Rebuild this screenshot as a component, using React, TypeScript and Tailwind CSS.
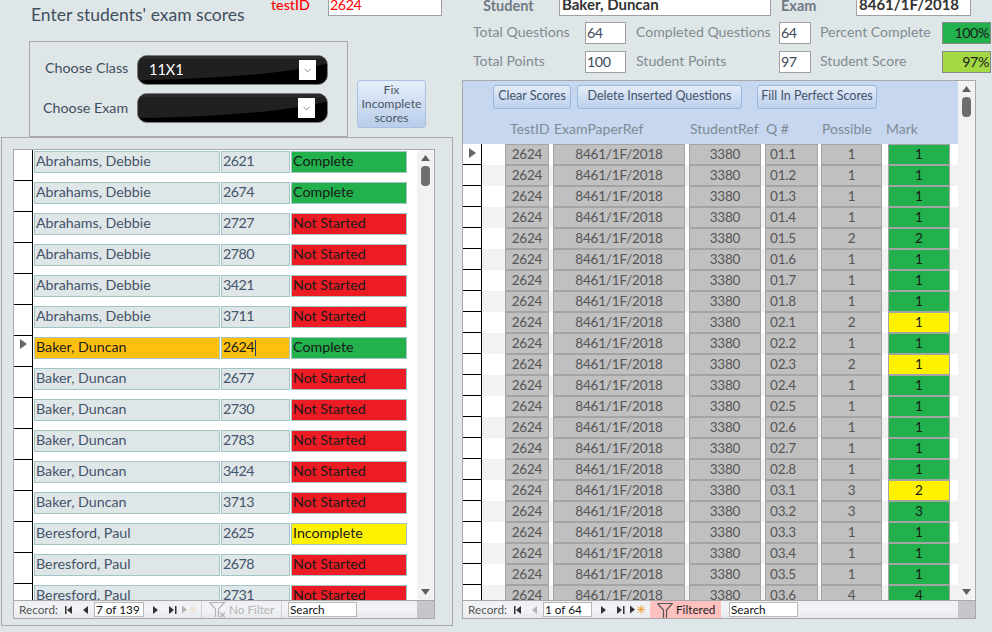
import { ChevronDown } from "lucide-react";

const FONT = "font-['Lato','Open_Sans',sans-serif]";

const students: [string, string, string][] = [
  ["Abrahams, Debbie", "2621", "Complete"],
  ["Abrahams, Debbie", "2674", "Complete"],
  ["Abrahams, Debbie", "2727", "Not Started"],
  ["Abrahams, Debbie", "2780", "Not Started"],
  ["Abrahams, Debbie", "3421", "Not Started"],
  ["Abrahams, Debbie", "3711", "Not Started"],
  ["Baker, Duncan", "2624", "Complete"],
  ["Baker, Duncan", "2677", "Not Started"],
  ["Baker, Duncan", "2730", "Not Started"],
  ["Baker, Duncan", "2783", "Not Started"],
  ["Baker, Duncan", "3424", "Not Started"],
  ["Baker, Duncan", "3713", "Not Started"],
  ["Beresford, Paul", "2625", "Incomplete"],
  ["Beresford, Paul", "2678", "Not Started"],
  ["Beresford, Paul", "2731", "Not Started"],
];

// question, possible, mark
const scores: [string, number, number][] = [
  ["01.1", 1, 1], ["01.2", 1, 1], ["01.3", 1, 1], ["01.4", 1, 1],
  ["01.5", 2, 2], ["01.6", 1, 1], ["01.7", 1, 1], ["01.8", 1, 1],
  ["02.1", 2, 1], ["02.2", 1, 1], ["02.3", 2, 1], ["02.4", 1, 1],
  ["02.5", 1, 1], ["02.6", 1, 1], ["02.7", 1, 1], ["02.8", 1, 1],
  ["03.1", 3, 2], ["03.2", 3, 3], ["03.3", 1, 1], ["03.4", 1, 1],
  ["03.5", 1, 1], ["03.6", 4, 4],
];

function statusClass(s: string) {
  if (s === "Complete") return "bg-[#22b14c]";
  if (s === "Incomplete") return "bg-[#fff200]";
  return "bg-[#ed1c24]";
}

function Combo({ label, value, labelClass, boxClass }: { label: string; value: string; labelClass: string; boxClass: string }) {
  return (
    <div className="flex items-center">
      <span className={`w-[94px] shrink-0 text-[14.25px] text-[#3f4f5f] ${labelClass}`}>{label}</span>
      <div className="relative flex h-[30px] w-[191px] items-center justify-between overflow-hidden rounded-[10px] border border-[#7c7c7c] bg-black pl-[11px] text-[14.5px] text-white">
        {/* glossy arc across the black pill */}
        <svg className="absolute left-0 top-0" width="191" height="30" viewBox="0 0 191 30">
          <path d="M0 0 H191 V7 Q130 22 0 24 Z" fill="#202020" />
          <path d="M0 0 H191 V3 H0 Z" fill="#2c2c2c" />
        </svg>
        <span className="relative">{value}</span>
        <span className={`relative flex h-[20px] w-[17px] items-center justify-center bg-white ${boxClass}`}>
          <ChevronDown className="h-[11px] w-[11px] text-[#555]" strokeWidth={1.5} />
        </span>
      </div>
    </div>
  );
}

function Tri({ className }: { className?: string }) {
  return (
    <svg width="7" height="10" viewBox="0 0 7 10" className={className}>
      <path d="M0 0 L7 5 L0 10 Z" fill="currentColor" />
    </svg>
  );
}

function StudentRow({ row, current }: { row: [string, string, string]; current: boolean }) {
  const field = current
    ? "bg-[#ffc10e] text-[#1c1c1c]"
    : "bg-[#dfe6e8] text-[#44546a]";
  return (
    <div className="flex h-[31px] shrink-0 bg-white">
      <div className="flex h-full w-[19px] shrink-0 justify-center border-r border-b border-black bg-white pt-[3px]">
        {current && <Tri className="text-[#666]" />}
      </div>
      <div className="flex items-start pt-[1px] pl-[1px] text-[14.25px]">
        <div className={`flex h-[22px] w-[186px] items-center border border-[#a3c4c4] pb-[2px] pl-[1px] ${field}`}>{row[0]}</div>
        <div className={`ml-[1px] flex h-[22px] w-[69px] items-center border border-[#a3c4c4] pb-[2px] pl-[1px] tracking-[-0.5px] ${field}`}>
          {row[1]}
          {current && <span className="ml-[1px] mt-[2px] h-[16px] w-[1px] bg-[#1c3a78]" />}
        </div>
        <div className={`ml-[1px] flex h-[22px] w-[116px] items-center border border-[#a3c4c4] pb-[2px] pl-[1px] text-[#1a1a1a] ${statusClass(row[2])}`}>{row[2]}</div>
      </div>
    </div>
  );
}

function Scrollbar() {
  return (
    <div className="flex w-[17px] shrink-0 flex-col items-center rounded-[4px] bg-[#f2f2f2] py-[5px]">
      <svg width="9" height="6" viewBox="0 0 9 6"><path d="M4.5 0 L9 6 L0 6 Z" fill="#606060" /></svg>
      <div className="mt-[5px] h-[20px] w-[9px] rounded-[4px] bg-[#6d6d6d]" />
      <svg className="mt-auto" width="9" height="6" viewBox="0 0 9 6"><path d="M0 0 L9 0 L4.5 6 Z" fill="#606060" /></svg>
    </div>
  );
}

function NavBar({ record, filtered, searchMargin, boxWidth }: { record: string; filtered: boolean; searchMargin: string; boxWidth: string }) {
  const on = "#333";
  const off = "#b4b4b4";
  return (
    <div className="flex h-[17px] min-w-0 flex-1 items-center whitespace-nowrap bg-gradient-to-b from-[#eef0f3] via-[#f2f3f6] to-[#e6e8ec] text-[11.75px] text-[#555]">
      <span className="ml-[5px] w-[43px] shrink-0 pt-[1px]">Record:</span>
      <svg width="8" height="8" viewBox="0 0 8 8" className="ml-[3px] shrink-0"><path d="M0 0 H1.5 V8 H0 Z M7 0 V8 L2 4 Z" fill={on} /></svg>
      <svg width="6" height="8" viewBox="0 0 6 8" className="ml-[10px] shrink-0"><path d="M5 0 V8 L0 4 Z" fill={filtered ? off : on} /></svg>
      <div className={`ml-[5px] flex h-[15px] shrink-0 items-center border border-[#b8b8b8] bg-white pl-[1px] text-[#111] ${boxWidth}`}>{record}</div>
      <svg width="6" height="8" viewBox="0 0 6 8" className="ml-[9px] shrink-0"><path d="M0 0 V8 L5 4 Z" fill={on} /></svg>
      <svg width="8" height="8" viewBox="0 0 8 8" className="ml-[10px] shrink-0"><path d="M0 0 V8 L5 4 Z M6 0 H7.5 V8 H6 Z" fill={on} /></svg>
      <svg width="15" height="9" viewBox="0 0 15 9" className="ml-[5px] shrink-0">
        <path d="M0 0.5 V8.5 L5 4.5 Z" fill={filtered ? on : off} />
        <path d="M11 0.5 V8.5 M7 4.5 H15 M8 1.5 L14 7.5 M14 1.5 L8 7.5" stroke={filtered ? "#f0a030" : "#ece2cc"} strokeWidth="1" />
      </svg>
      {filtered ? (
        <div className="ml-[5px] flex h-[17px] w-[71px] shrink-0 items-center gap-[3px] bg-[#ffc0c0] pl-[7px] text-[#222]">
          <svg width="16" height="15" viewBox="0 0 16 15" className="mt-[1px] shrink-0">
            <path d="M0.5 0.5 H15.5 L9.5 7 V15 M6.5 15 V7 L0.5 0.5" fill="none" stroke="#555" strokeWidth="1.2" />
          </svg>
          Filtered
        </div>
      ) : (
        <div className="ml-[4px] flex h-[17px] w-[81px] shrink-0 items-center gap-[3px] border-x border-[#d0d0d0] pl-[7px] text-[#b4b4b4]">
          <svg width="17" height="16" viewBox="0 0 17 16" className="mt-[1px] shrink-0">
            <path d="M0.5 0.5 H15.5 L9.5 7 V15 M6.5 15 V7 L0.5 0.5" fill="none" stroke="#b5b5b5" strokeWidth="1.2" />
            <path d="M11 10.5 L16 15.5 M16 10.5 L11 15.5" stroke="#b5b5b5" strokeWidth="1.2" />
          </svg>
          No Filter
        </div>
      )}
      <div className={`flex h-[15px] w-[69px] shrink-0 items-center border border-[#b8b8b8] bg-white pl-[1px] text-[#111] ${searchMargin}`}>Search</div>
    </div>
  );
}

function StatLabel({ children, w }: { children: string; w: string }) {
  return <span className={`shrink-0 pb-[3px] text-[14.1px] text-[#7f8a92] ${w}`}>{children}</span>;
}

function Box({ children, w }: { children: string; w: string }) {
  return (
    <div className={`flex h-[22px] shrink-0 items-center border border-[#a0a0a0] bg-white pl-[1px] text-[14.25px] tracking-[-0.4px] text-[#3c4a58] ${w}`}>
      {children}
    </div>
  );
}

function ScoreCell({ w, ml, children, left }: { w: string; ml: string; children: string; left?: boolean }) {
  return (
    <div className={`flex h-[21px] shrink-0 items-center border border-[#a4a4a4] bg-[#c0c0c0] pb-[1px] tracking-[-0.2px] text-[#555] ${w} ${ml} ${left ? "pl-[4px]" : "justify-center"}`}>
      {children}
    </div>
  );
}

function PanelButton({ w, ml, children }: { w: string; ml: string; children: string }) {
  return (
    <button className={`h-[24px] rounded-[3px] border border-[#9ab8de] bg-gradient-to-b from-[#e4ecf8] to-[#bcd0ec] pb-[1px] ${w} ${ml}`}>
      {children}
    </button>
  );
}

export default function App() {
  return (
    <div className={`flex h-[632px] w-[992px] overflow-hidden bg-[#dfe6e8] ${FONT}`}>
      {/* left side: class picker and the student list */}
      <div className="ml-[1px] flex w-[452px] shrink-0 flex-col">
        <div className="flex h-[41px] shrink-0 items-start">
          <h1 className="ml-[30px] mt-[3px] w-[215px] shrink-0 whitespace-nowrap text-[17.5px] leading-[23px] text-[#3f4f5f]">Enter students' exam scores</h1>
          <span className="ml-[25px] -mt-[4px] w-[57px] shrink-0 text-[14.25px] leading-[18px] font-medium text-[#ff0000]">testID</span>
          <div className="-mt-[8px] flex h-[24px] w-[114px] items-end border border-[#a0a0a0] bg-white pl-[1px] text-[14.25px] leading-[21px] tracking-[-0.4px] text-[#ff0000]">2624</div>
        </div>
        <div className="flex h-[96px] shrink-0 items-start">
          <div className="ml-[28px] flex h-[96px] w-[319px] shrink-0 flex-col justify-center gap-[8px] border border-[#a8a8a8] pl-[13px]">
            <Combo label="Choose Class" value="11X1" labelClass="-mt-[5px] pl-[2px]" boxClass="mr-[11px]" />
            <Combo label="Choose Exam" value="" labelClass="" boxClass="mr-[12px]" />
          </div>
          <button className="ml-[9px] mt-[39px] flex h-[48px] w-[69px] shrink-0 items-center justify-center rounded-[3px] border border-[#a9c0e2] bg-gradient-to-b from-[#e6eefa] to-[#b9cdea] pb-[1px] text-[12.25px] leading-[14px] text-[#4a5766]">
            Fix
            <br />
            Incomplete
            <br />
            scores
          </button>
        </div>
        <div className="flex h-[489px] shrink-0 border border-[#a8a8a8] pl-[11px] pt-[11px]">
          <div className="flex h-[470px] w-[422px] flex-col border border-[#a8a8a8]">
            <div className="flex min-h-0 flex-1 bg-white">
              <div className="flex w-[403px] flex-col overflow-hidden">
                {students.map((r, i) => (
                  <StudentRow key={r[1]} row={r} current={i === 6} />
                ))}
              </div>
              <Scrollbar />
            </div>
            <div className="flex shrink-0 border-t border-[#a8a8a8] bg-[#c4c6c9]">
              <NavBar record="7 of 139" filtered={false} searchMargin="ml-[6px]" boxWidth="w-[50px]" />
              <div className="w-[17px] shrink-0" />
            </div>
          </div>
        </div>
      </div>

      {/* right side: the selected test and its questions */}
      <div className="ml-[9px] flex w-[530px] shrink-0 flex-col">
        <div className="flex h-[16px] shrink-0 items-end">
          <span className="ml-[21px] w-[76px] shrink-0 text-[14.5px] leading-[20px] font-bold text-[#6f7a84]">Student</span>
          <div className="-mt-[8px] flex h-[24px] w-[212px] items-end border border-[#a0a0a0] bg-white pl-[2px] text-[15px] leading-[21px] font-bold text-[#333]">Baker, Duncan</div>
          <span className="ml-[10px] w-[75px] shrink-0 text-[14.5px] leading-[20px] font-bold text-[#6f7a84]">Exam</span>
          <div className="-mt-[8px] flex h-[24px] w-[115px] items-end border border-[#a0a0a0] bg-white pl-[2px] text-[15px] leading-[21px] font-bold text-[#333]">8461/1F/2018</div>
        </div>
        <div className="mt-[6px] flex h-[22px] shrink-0 items-center">
          <span className="w-[11px]" />
          <StatLabel w="w-[112px]">Total Questions</StatLabel>
          <Box w="w-[41px]">64</Box>
          <span className="w-[10px]" />
          <StatLabel w="w-[143px]">Completed Questions</StatLabel>
          <Box w="w-[32px]">64</Box>
          <span className="w-[9px]" />
          <StatLabel w="w-[122px]">Percent Complete</StatLabel>
          <div className="flex h-[22px] w-[49px] items-center justify-end border border-[#8a8a8a] bg-[#22b14c] pr-[1px] text-[14.25px] tracking-[-0.4px] text-[#1a1a1a]">100%</div>
        </div>
        <div className="mt-[7px] flex h-[22px] shrink-0 items-center">
          <span className="w-[11px]" />
          <StatLabel w="w-[112px]">Total Points</StatLabel>
          <Box w="w-[41px]">100</Box>
          <span className="w-[10px]" />
          <StatLabel w="w-[143px]">Student Points</StatLabel>
          <Box w="w-[32px]">97</Box>
          <span className="w-[9px]" />
          <StatLabel w="w-[122px]">Student Score</StatLabel>
          <div className="flex h-[22px] w-[49px] items-center justify-end border border-[#8a8a8a] bg-[#a5d944] pr-[1px] text-[14.25px] tracking-[-0.4px] text-[#1a1a1a]">97%</div>
        </div>
        <div className="mt-[7px] flex h-[539px] w-[514px] shrink-0 flex-col border border-[#a8a8a8] bg-white text-[13.5px]">
          <div className="flex min-h-0 flex-1">
            <div className="flex w-[495px] flex-col overflow-hidden">
              <div className="h-[63px] shrink-0 bg-[#c6d7ef]">
                <div className="flex pt-[4px] text-[12.5px] text-[#44546a]">
                  <PanelButton w="w-[78px]" ml="ml-[30px]">Clear Scores</PanelButton>
                  <PanelButton w="w-[165px]" ml="ml-[6px]">Delete Inserted Questions</PanelButton>
                  <PanelButton w="w-[120px]" ml="ml-[15px]">Fill In Perfect Scores</PanelButton>
                </div>
                <div className="mt-[10px] flex text-[14px] leading-[20px] text-[#808a94]">
                  <span className="ml-[47px] w-[44px]">TestID</span>
                  <span className="w-[136px]">ExamPaperRef</span>
                  <span className="w-[76px]">StudentRef</span>
                  <span className="w-[56px]">Q #</span>
                  <span className="w-[64px]">Possible</span>
                  <span>Mark</span>
                </div>
              </div>
              {scores.map((s, i) => (
                <div key={s[0]} className={`flex h-[21px] shrink-0 ${i % 2 ? "bg-[#f2f2f2]" : "bg-white"}`}>
                  <div className="flex h-full w-[19px] shrink-0 justify-center border-r border-b border-black bg-white pt-[4px]">
                    {i === 0 && <Tri className="text-[#666]" />}
                  </div>
                  <ScoreCell w="w-[44px]" ml="ml-[23px]">2624</ScoreCell>
                  <ScoreCell w="w-[132px]" ml="ml-[4px]">8461/1F/2018</ScoreCell>
                  <ScoreCell w="w-[72px]" ml="ml-[4px]">3380</ScoreCell>
                  <ScoreCell w="w-[53px]" ml="ml-[4px]" left>{s[0]}</ScoreCell>
                  <ScoreCell w="w-[61px]" ml="ml-[3px]">{String(s[1])}</ScoreCell>
                  <div className={`ml-[6px] flex h-[21px] w-[62px] shrink-0 items-center justify-center border border-[#a4a4a4] pb-[1px] text-[#1a1a1a] ${s[1] === s[2] ? "bg-[#22b14c]" : "bg-[#fff200]"}`}>
                    {s[2]}
                  </div>
                </div>
              ))}
            </div>
            <Scrollbar />
          </div>
          <div className="flex shrink-0 border-t border-[#a8a8a8] bg-[#c4c6c9]">
            <NavBar record="1 of 64" filtered={true} searchMargin="ml-[8px]" boxWidth="w-[49px]" />
            <div className="w-[17px] shrink-0" />
          </div>
        </div>
      </div>
    </div>
  );
}
